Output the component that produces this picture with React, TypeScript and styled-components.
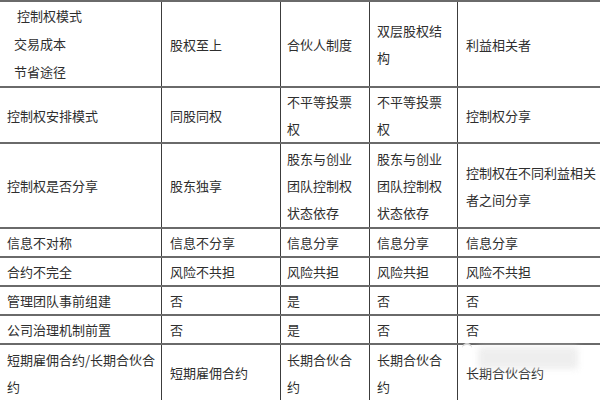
import React from 'react';
import styled, { createGlobalStyle } from 'styled-components';

const GlobalStyle = createGlobalStyle`
  html, body {
    margin: 0;
    padding: 0;
    background: #ffffff;
  }
  body {
    width: 600px;
    height: 400px;
    overflow: hidden;
  }
`;

const Page = styled.div`
  position: relative;
  width: 600px;
  height: 400px;
  overflow: hidden;
  background: #ffffff;
`;

const Table = styled.table`
  margin-left: -1px;
  width: 606px;
  table-layout: fixed;
  border-collapse: collapse;
  font-family: "Noto Sans CJK SC", "Noto Sans", sans-serif;
  font-size: 13px;
  line-height: 27px;
  color: #2e2e2e;
`;

const Row = styled.tr<{ $h: number }>`
  height: ${({ $h }) => $h}px;
`;

const Cell = styled.td<{ $pl?: number; $pr?: number }>`
  border-top: 2px solid #6a6a6a;
  border-bottom: 2px solid #6a6a6a;
  border-left: 1px solid #3c3c3c;
  border-right: 1px solid #3c3c3c;
  padding: 0 ${({ $pr }) => $pr ?? 8}px 0 ${({ $pl }) => $pl ?? 7}px;
  vertical-align: middle;
  text-align: left;
  word-break: break-all;
`;

const HeadLine = styled.div<{ $indent: number }>`
  padding-left: ${({ $indent }) => $indent}px;
  line-height: 28px;
`;

const Watermark = styled.div`
  position: absolute;
  left: 478px;
  top: 347px;
  width: 100px;
  height: 22px;
  background: #ececec;
  filter: blur(3px);
  opacity: 0.85;
`;

const WaterIcon = styled.div`
  position: absolute;
  left: 462px;
  top: 343px;
  width: 10px;
  height: 8px;
  border-top: 2px solid #d4d4d4;
  border-radius: 50% 50% 0 0;
  filter: blur(0.6px);
`;

const rows: { h: number; cells: string[] }[] = [
  { h: 56, cells: ['控制权安排模式', '同股同权', '不平等投票权', '不平等投票权', '控制权分享'] },
  { h: 85, cells: ['控制权是否分享', '股东独享', '股东与创业团队控制权状态依存', '股东与创业团队控制权状态依存', '控制权在不同利益相关者之间分享'] },
  { h: 28, cells: ['信息不对称', '信息不分享', '信息分享', '信息分享', '信息分享'] },
  { h: 28, cells: ['合约不完全', '风险不共担', '风险共担', '风险共担', '风险不共担'] },
  { h: 28, cells: ['管理团队事前组建', '否', '是', '否', '否'] },
  { h: 28, cells: ['公司治理机制前置', '否', '是', '否', '否'] },
  { h: 57, cells: ['短期雇佣合约/长期合伙合约', '短期雇佣合约', '长期合伙合约', '长期合伙合约', '长期合伙合约'] },
];

const padLeft = [7, 8, 6, 7, 8];
const padRight = [2, 8, 8, 8, 8];

export default function App() {
  return (
    <Page>
      <GlobalStyle />
      <Table>
        <colgroup>
          <col style={{ width: 162 }} />
          <col style={{ width: 119 }} />
          <col style={{ width: 89 }} />
          <col style={{ width: 88 }} />
          <col style={{ width: 148 }} />
        </colgroup>
        <tbody>
          <Row $h={86}>
            <Cell $pl={7}>
              <HeadLine $indent={10}>控制权模式</HeadLine>
              <HeadLine $indent={7}>交易成本</HeadLine>
              <HeadLine $indent={7}>节省途径</HeadLine>
            </Cell>
            <Cell $pl={8}>股权至上</Cell>
            <Cell $pl={6}>合伙人制度</Cell>
            <Cell $pl={7}>双层股权结构</Cell>
            <Cell $pl={8}>利益相关者</Cell>
          </Row>
          {rows.map((r, i) => (
            <Row key={i} $h={r.h}>
              {r.cells.map((c, j) => (
                <Cell key={j} $pl={padLeft[j]} $pr={padRight[j]}>{c}</Cell>
              ))}
            </Row>
          ))}
        </tbody>
      </Table>
      <WaterIcon />
      <Watermark />
    </Page>
  );
}
